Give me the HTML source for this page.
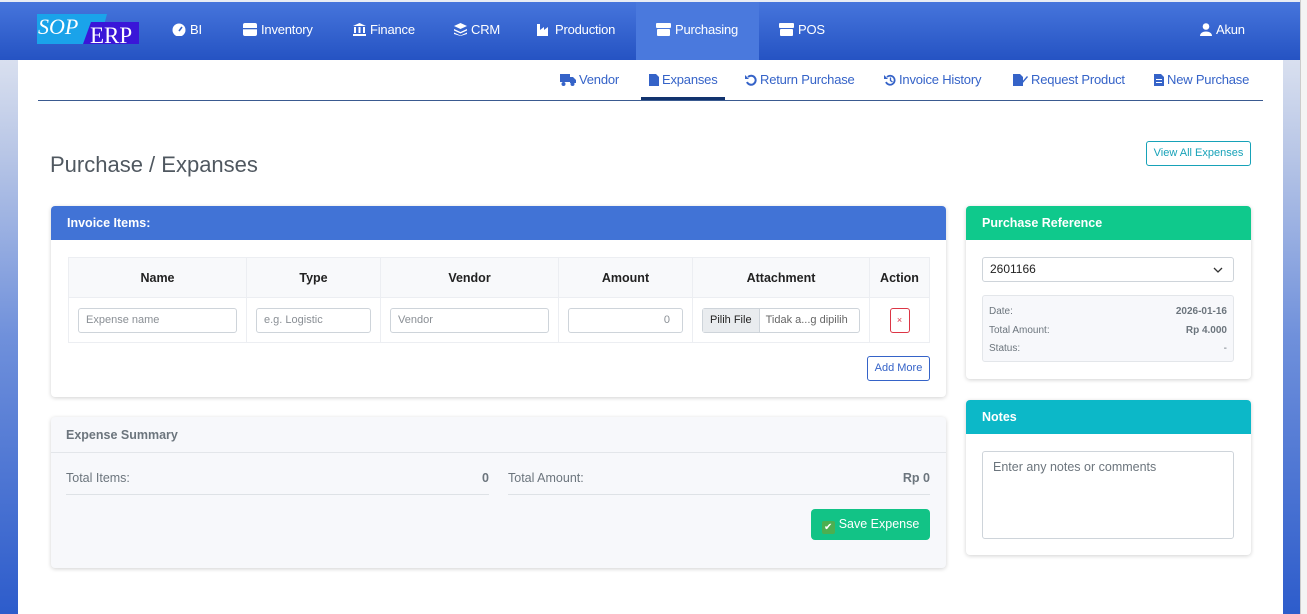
<!DOCTYPE html>
<html><head><meta charset="utf-8"><style>
*{box-sizing:border-box;margin:0;padding:0}
body{width:1307px;height:614px;overflow:hidden;font-family:"Liberation Sans",sans-serif;background:linear-gradient(180deg,#eef0f5 0%,#b8c6e6 25%,#6f90db 55%,#2d5ccb 100%);position:relative}
.scroll{position:absolute;right:0;top:0;width:7px;height:614px;background:#f4f4f4;border-left:1px solid #ccc}
.nav{position:absolute;left:0;top:0;width:1300px;height:60px;background:linear-gradient(180deg,#4675dc,#2553c3);border-top:2px solid #e8ecf4}
.logo{position:absolute;left:37px;top:12px;width:102px;height:30px}
.ni{position:absolute;top:20px;color:#fff;font-size:13px;height:20px;line-height:16px;letter-spacing:-0.2px}
.ni svg{vertical-align:-2px;margin-right:4px}
.active{position:absolute;left:636px;top:0;width:123px;height:58px;background:#4a79dd}
.content{position:absolute;left:18px;top:60px;width:1265px;height:554px;background:#fff}
.sub{position:absolute;top:12px;font-size:13px;color:#3563c8;letter-spacing:-0.2px}
.sub svg{vertical-align:-2px;margin-right:3px}
.subline{position:absolute;left:20px;top:40px;width:1225px;height:1px;background:#3a5a90}
.subact{position:absolute;left:623px;top:37px;width:84px;height:3px;background:#12336e}
h1{position:absolute;left:32px;top:92px;font-size:22px;font-weight:normal;color:#505860}
.vae{position:absolute;left:1128px;top:81px;width:105px;height:25px;border:1px solid #17a2b8;color:#17a2b8;font-size:11px;text-align:center;line-height:22px;border-radius:3px}
.card{position:absolute;background:#fff;border-radius:4px;box-shadow:0 1px 4px rgba(0,0,0,.18)}
.ch{height:34px;color:#fff;font-weight:bold;font-size:12.5px;line-height:34px;padding-left:16px;border-radius:4px 4px 0 0}
table{position:absolute;left:17px;top:51px;border-collapse:collapse;font-size:12.5px}
th{background:#f8f9fb;height:40px;font-weight:bold;color:#222;border:1px solid #eceef2}
td{height:45px;border:1px solid #eceef2;padding:0 9px}
.in{height:25px;border:1px solid #ced4da;border-radius:3px;font-size:11px;color:#8a8f95;line-height:23px;padding:0 7px}
.btn-add{position:absolute;right:16px;top:150px;width:63px;height:25px;border:1px solid #3563c8;color:#3563c8;font-size:11px;line-height:22px;text-align:center;border-radius:3px}
</style></head><body>
<div class="scroll"></div>
<div class="nav">
 <div class="active"></div>
 <svg class="logo" viewBox="0 0 102 30"><polygon points="0,0 70,0 62,30 0,30" fill="#1aa3ea"/><polygon points="54,8 102,8 102,30 46,30" fill="#3a16d8"/><text x="1" y="20" font-family="Liberation Serif" font-style="italic" font-size="22" fill="#fff">SOP</text><text x="53" y="29" font-family="Liberation Serif" font-size="23" fill="#fff">ERP</text></svg>
 <div class="ni" style="left:172px"><svg width="14" height="13" viewBox="0 0 14 13"><circle cx="7" cy="7" r="6.5" fill="#fff"/><path d="M7 8 L10 4" stroke="#3563c8" stroke-width="1.6"/></svg>BI</div>
 <div class="ni" style="left:243px"><svg width="14" height="13" viewBox="0 0 14 13"><rect x="0" y="0" width="14" height="13" rx="2" fill="#fff"/><rect x="0" y="5" width="14" height="1.3" fill="#3563c8"/></svg>Inventory</div>
 <div class="ni" style="left:353px"><svg width="13" height="13" viewBox="0 0 13 13" fill="#fff"><path d="M6.5 0 L13 3 H0Z"/><rect x="1" y="4" width="2" height="6"/><rect x="5.5" y="4" width="2" height="6"/><rect x="10" y="4" width="2" height="6"/><rect x="0" y="11" width="13" height="2"/></svg>Finance</div>
 <div class="ni" style="left:454px"><svg width="13" height="13" viewBox="0 0 13 13" fill="#fff"><path d="M6.5 0 L13 3 L6.5 6 L0 3Z M0 6 L6.5 9 L13 6 V7.5 L6.5 10.5 L0 7.5Z M0 9.5 L6.5 12.5 L13 9.5 V11 L6.5 13 L0 11Z"/></svg>CRM</div>
 <div class="ni" style="left:537px"><svg width="14" height="12" viewBox="0 0 14 12" fill="#fff"><path d="M0 0H3V6L7 3V6L11 3V12H0Z"/></svg>Production</div>
 <div class="ni" style="left:656px"><svg width="15" height="13" viewBox="0 0 15 13" fill="#fff"><rect x="0" y="0" width="15" height="5" rx="1"/><rect x="1" y="6" width="13" height="7" rx="1"/></svg>Purchasing</div>
 <div class="ni" style="left:779px"><svg width="15" height="13" viewBox="0 0 15 13" fill="#fff"><rect x="0" y="0" width="15" height="5" rx="1"/><rect x="1" y="6" width="13" height="7" rx="1"/></svg>POS</div>
 <div class="ni" style="left:1200px"><svg width="12" height="13" viewBox="0 0 12 13" fill="#fff"><circle cx="6" cy="3.5" r="3.3"/><path d="M0 13 C0 7 12 7 12 13Z"/></svg>Akun</div>
</div>
<div class="content">
 <div class="sub" style="left:542px"><svg width="16" height="12" viewBox="0 0 16 12" fill="#3563c8"><rect x="0" y="0" width="10" height="8"/><path d="M10 3H13L16 6V9H10Z"/><circle cx="3.5" cy="10" r="2"/><circle cx="12.5" cy="10" r="2"/></svg>Vendor</div>
 <div class="sub" style="left:631px"><svg width="10" height="12" viewBox="0 0 10 12" fill="#3563c8"><path d="M0 0H7L10 3V12H0Z"/></svg>Expanses</div>
 <div class="sub" style="left:727px"><svg width="12" height="12" viewBox="0 0 12 12"><path d="M3 3 A4.5 4.5 0 1 1 2 8" fill="none" stroke="#3563c8" stroke-width="2"/><path d="M0 1V5H4Z" fill="#3563c8"/></svg>Return Purchase</div>
 <div class="sub" style="left:866px"><svg width="12" height="12" viewBox="0 0 12 12"><path d="M3 3 A4.5 4.5 0 1 1 2 8" fill="none" stroke="#3563c8" stroke-width="1.8"/><path d="M0 1V5H4Z" fill="#3563c8"/><path d="M6.5 3.5V6.5L8.5 8" stroke="#3563c8" fill="none" stroke-width="1.3"/></svg>Invoice History</div>
 <div class="sub" style="left:995px"><svg width="15" height="12" viewBox="0 0 15 12" fill="#3563c8"><path d="M0 0H7L10 3V12H0Z"/><path d="M8 9L14 2L15 3L9 10H8Z"/></svg>Request Product</div>
 <div class="sub" style="left:1136px"><svg width="10" height="12" viewBox="0 0 10 12" fill="#3563c8"><path d="M0 0H7L10 3V12H0Z"/><rect x="2" y="5" width="6" height="1" fill="#fff"/><rect x="2" y="8" width="6" height="1" fill="#fff"/></svg>New Purchase</div>
 <div class="subline"></div><div class="subact"></div>
 <h1>Purchase / Expanses</h1>
 <div class="vae">View All Expenses</div>

 <div class="card" style="left:33px;top:146px;width:895px;height:191px">
  <div class="ch" style="background:#4173d6">Invoice Items:</div>
  <table>
   <tr><th style="width:178px">Name</th><th style="width:134px">Type</th><th style="width:178px">Vendor</th><th style="width:134px">Amount</th><th style="width:177px">Attachment</th><th style="width:60px">Action</th></tr>
   <tr><td><div class="in">Expense name</div></td><td><div class="in">e.g. Logistic</div></td><td><div class="in">Vendor</div></td><td><div class="in" style="text-align:right;padding-right:12px">0</div></td>
   <td><div class="in" style="padding:0;display:flex;color:#666"><span style="background:#e9ecef;color:#222;padding:0 7px;border-right:1px solid #ced4da">Pilih File</span><span style="padding-left:6px">Tidak a...g dipilih</span></div></td>
   <td style="text-align:center"><div style="display:inline-block;width:20px;height:25px;border:1px solid #dc3545;border-radius:3px;color:#dc3545;font-size:9px;line-height:23px">×</div></td></tr>
  </table>
  <div class="btn-add">Add More</div>
 </div>

 <div class="card" style="left:33px;top:357px;width:895px;height:151px;background:#f7f8fb">
  <div style="height:36px;border-bottom:1px solid #e3e6ea;padding-left:15px;line-height:36px;font-size:12.5px;font-weight:bold;color:#6c757d">Expense Summary</div>
  <div style="position:absolute;left:15px;top:54px;width:423px;height:24px;border-bottom:1px solid #dee2e6;font-size:12.5px;color:#6c757d">Total Items:<span style="float:right;font-weight:bold">0</span></div>
  <div style="position:absolute;left:457px;top:54px;width:422px;height:24px;border-bottom:1px solid #dee2e6;font-size:12.5px;color:#6c757d">Total Amount:<span style="float:right;font-weight:bold">Rp 0</span></div>
  <div style="position:absolute;left:760px;top:92px;width:119px;height:31px;background:#12c386;border-radius:4px;color:#fff;font-size:12.5px;line-height:31px;text-align:center"><span style="display:inline-block;width:13px;height:13px;background:#4caf50;color:#fff;font-size:10px;line-height:13px;vertical-align:-2px;margin-right:4px;border-radius:2px">✔</span>Save Expense</div>
 </div>

 <div class="card" style="left:948px;top:146px;width:285px;height:173px">
  <div class="ch" style="background:#0fc98c">Purchase Reference</div>
  <div style="position:absolute;left:16px;top:51px;width:252px;height:25px;border:1px solid #ced4da;border-radius:3px;font-size:12px;line-height:23px;padding-left:7px;color:#222">2601166<svg style="position:absolute;right:10px;top:9px" width="10" height="6" viewBox="0 0 10 6"><path d="M1 1L5 5L9 1" stroke="#333" fill="none" stroke-width="1.3"/></svg></div>
  <div style="position:absolute;left:16px;top:89px;width:252px;height:67px;background:#f7f8fb;border:1px solid #e3e6ea;border-radius:3px;font-size:10px;color:#6c757d;padding:7px 6px;line-height:18.5px">
   <div>Date:<b style="float:right">2026-01-16</b></div><div>Total Amount:<b style="float:right">Rp 4.000</b></div><div>Status:<span style="float:right">-</span></div>
  </div>
 </div>

 <div class="card" style="left:948px;top:340px;width:285px;height:155px">
  <div class="ch" style="background:#0cb8c8">Notes</div>
  <div style="position:absolute;left:16px;top:51px;width:252px;height:88px;border:1px solid #ced4da;border-radius:3px;font-size:12.5px;color:#6c757d;padding:8px 10px">Enter any notes or comments</div>
 </div>
</div>
</body></html>
